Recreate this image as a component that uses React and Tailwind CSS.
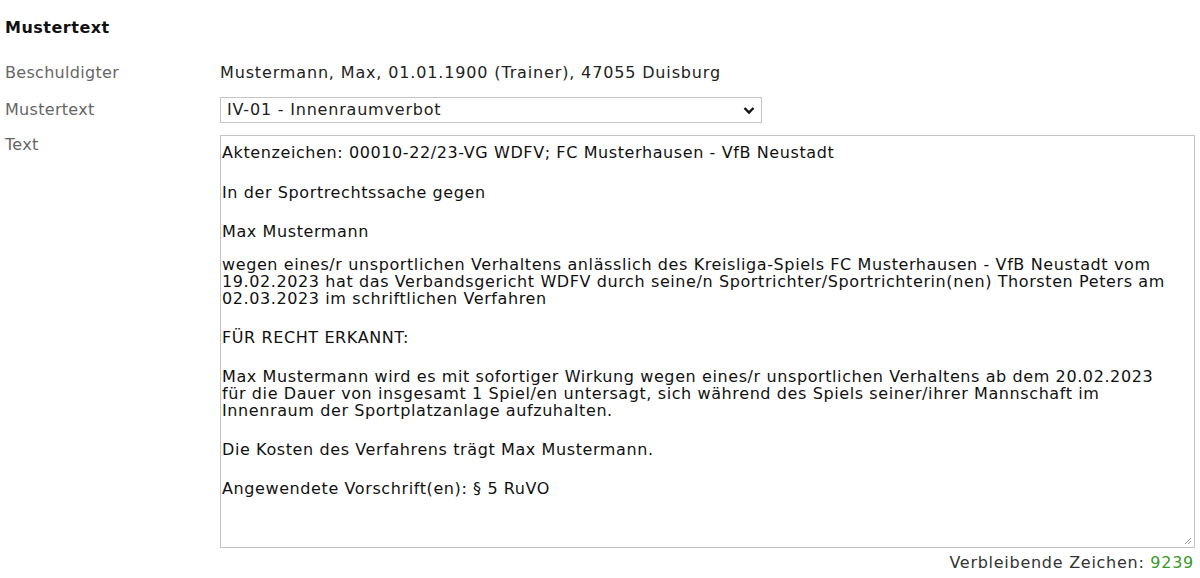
import React from "react";

const paras = [
  { mt: "mt-0", lines: ["Aktenzeichen: 00010-22/23-VG WDFV; FC Musterhausen - VfB Neustadt"] },
  { mt: "mt-[23px]", lines: ["In der Sportrechtssache gegen"] },
  { mt: "mt-[22px]", lines: ["Max Mustermann"] },
  {
    mt: "mt-[16px]",
    lines: [
      "wegen eines/r unsportlichen Verhaltens anlässlich des Kreisliga-Spiels FC Musterhausen - VfB Neustadt vom",
      "19.02.2023 hat das Verbandsgericht WDFV durch seine/n Sportrichter/Sportrichterin(nen) Thorsten Peters am",
      "02.03.2023 im schriftlichen Verfahren",
    ],
  },
  { mt: "mt-[22px]", lines: ["FÜR RECHT ERKANNT:"] },
  {
    mt: "mt-[22px]",
    lines: [
      "Max Mustermann wird es mit sofortiger Wirkung wegen eines/r unsportlichen Verhaltens ab dem 20.02.2023",
      "für die Dauer von insgesamt 1 Spiel/en untersagt, sich während des Spiels seiner/ihrer Mannschaft im",
      "Innenraum der Sportplatzanlage aufzuhalten.",
    ],
  },
  { mt: "mt-[22px]", lines: ["Die Kosten des Verfahrens trägt Max Mustermann."] },
  { mt: "mt-[22px]", lines: ["Angewendete Vorschrift(en): § 5 RuVO"] },
];

export default function App() {
  return (
    <div
      className="w-[1200px] h-[578px] bg-white text-[#222] overflow-hidden"
      style={{ fontFamily: '"DejaVu Sans", Verdana, sans-serif' }}
    >
      <div className="pl-[5px] pr-[5px] pt-[18px]">
        <h2 className="text-[16px] font-bold leading-[20px] tracking-[0.5px] text-[#111]">Mustertext</h2>
        <div className="mt-[22px] flex flex-col">
          <div className="flex items-center h-[26px]">
            <div className="w-[215px] text-[16px] tracking-[0.3px] text-[#666]">Beschuldigter</div>
            <div className="text-[16px] tracking-[0.85px] text-[#222]">
              Mustermann, Max, 01.01.1900 (Trainer), 47055 Duisburg
            </div>
          </div>
          <div className="flex items-center mt-[11px]">
            <div className="w-[215px] text-[16px] tracking-[0.3px] text-[#666]">Mustertext</div>
            <div className="w-[542px] h-[26px] border border-[#c4c4c4] flex items-center justify-between pl-[6px] pr-[6px] text-[16px] tracking-[0.8px] text-[#222]">
              <span>IV-01 - Innenraumverbot</span>
              <svg width="12" height="9" viewBox="0 0 12 9">
                <path d="M1.5 2 L6 6.5 L10.5 2" fill="none" stroke="#111" strokeWidth="2.4" />
              </svg>
            </div>
          </div>
          <div className="flex items-start mt-[12px]">
            <div className="w-[215px] text-[16px] tracking-[0.3px] text-[#666] leading-[20px]">Text</div>
            <div className="flex flex-col items-end">
              <div className="relative w-[975px] h-[413px] border border-[#c4c4c4] pl-[1px] pt-[8px] text-[16px] tracking-[0.6px] text-[#111] leading-[17px]">
                <div className="flex flex-col">
                  {paras.map((p, i) => (
                    <div key={i} className={p.mt}>
                      {p.lines.map((l, j) => (
                        <div key={j} className="whitespace-nowrap">{l}</div>
                      ))}
                    </div>
                  ))}
                </div>
                <svg className="absolute right-[2px] bottom-[2px]" width="9" height="9" viewBox="0 0 9 9">
                  <path d="M8 2 L2 8 M8 5 L5 8" stroke="#999" strokeWidth="1" />
                </svg>
              </div>
              <div className="mt-[6px] text-[16px] tracking-[0.73px] leading-[18px] text-[#333] pr-[1px]">
                Verbleibende Zeichen: <span className="text-[#3a9a2a]">9239</span>
              </div>
            </div>
          </div>
        </div>
      </div>
    </div>
  );
}
